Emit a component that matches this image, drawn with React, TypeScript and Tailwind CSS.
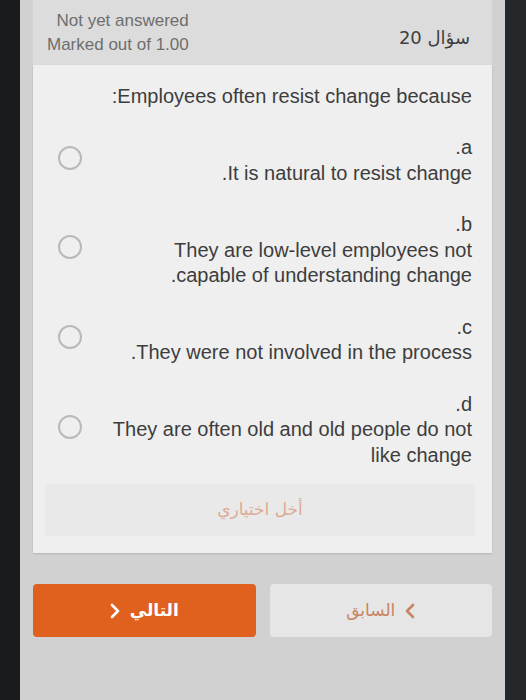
import React from "react";

const options = [
  { key: "a.", text: "It is natural to resist change." },
  { key: "b.", text: "They are low-level employees not capable of understanding change." },
  { key: "c.", text: "They were not involved in the process." },
  { key: "d.", text: "They are often old and old people do not like change" },
];

function Chevron({ dir }: { dir: "left" | "right" }) {
  return (
    <svg width="10" height="16" viewBox="0 0 10 16" fill="none">
      <polyline
        points={dir === "right" ? "2,2 8,8 2,14" : "8,2 2,8 8,14"}
        stroke="currentColor"
        strokeWidth="2.6"
        strokeLinecap="round"
        strokeLinejoin="round"
      />
    </svg>
  );
}

export default function App() {
  return (
    <div
      className="flex h-[700px] w-[526px] overflow-hidden bg-[#1c1f21]"
      style={{ fontFamily: '"Liberation Sans", "DejaVu Sans", sans-serif' }}
    >
      {/* left bezel */}
      <div className="w-[20px] shrink-0 bg-[#191c1e]" />

      {/* screen */}
      <div className="flex w-[485px] flex-col bg-[#d1d1d1] px-[13px]">
        {/* header */}
        <div className="flex h-[65px] shrink-0 items-start justify-between bg-[#dcdcdc] pt-[9px] pl-[14px] pr-[22px]">
          <div className="text-right text-[17px] leading-[24px] text-[#6e6e6e]">
            <div>Not yet answered</div>
            <div>Marked out of 1.00</div>
          </div>
          <div
            dir="rtl"
            className="pt-[17px] text-[18px] leading-[24px] text-[#3f3f3f]"
            style={{ fontFamily: '"DejaVu Sans", sans-serif' }}
          >
            سؤال 20
          </div>
        </div>

        {/* card */}
        <div className="flex h-[488px] shrink-0 flex-col bg-[#efefef] pt-[18px] shadow-[0_1px_2px_rgba(0,0,0,0.15)]">
          <div dir="rtl" className="pr-[20px] pl-[25px] text-[20px] leading-[26px] text-[#3d3d3d]">
            Employees often resist change because:
          </div>

          <div className="mt-[26px] flex flex-col gap-[26px] pr-[20px] pl-[25px]">
            {options.map((o) => (
              <div key={o.key} className="flex items-center gap-[26px]">
                <div className="mb-[6px] h-[24px] w-[24px] shrink-0 rounded-full border-2 border-[#b9b9b9]" />
                <div dir="rtl" className="flex-1 text-[20px] leading-[25.5px] text-[#3d3d3d]">
                  <div>{o.key}</div>
                  <div>{o.text}</div>
                </div>
              </div>
            ))}
          </div>

          <div className="mt-[16px] ml-[12px] mr-[17px] flex h-[52px] items-center justify-center bg-[#e9e9e9]">
            <span
              dir="rtl"
              className="text-[17px] text-[#dcab93]"
              style={{ fontFamily: '"DejaVu Sans", sans-serif' }}
            >
              أخل اختياري
            </span>
          </div>
        </div>

        {/* nav buttons */}
        <div className="mt-[31px] flex h-[53px] gap-[14px]">
          <button className="flex flex-1 items-center justify-center gap-[10px] rounded-[4px] bg-[#e0611e] text-white">
            <Chevron dir="right" />
            <span
              className="text-[17px] font-bold"
              style={{ fontFamily: '"DejaVu Sans", sans-serif' }}
            >
              التالي
            </span>
          </button>
          <button className="flex flex-1 items-center justify-center gap-[10px] rounded-[4px] bg-[#e6e6e6] text-[#c98463]">
            <span
              className="text-[17px]"
              style={{ fontFamily: '"DejaVu Sans", sans-serif' }}
            >
              السابق
            </span>
            <Chevron dir="left" />
          </button>
        </div>
        <div className="flex-1" />
      </div>

      {/* right bezel */}
      <div className="w-[21px] shrink-0 bg-[#25282a]" />
    </div>
  );
}
